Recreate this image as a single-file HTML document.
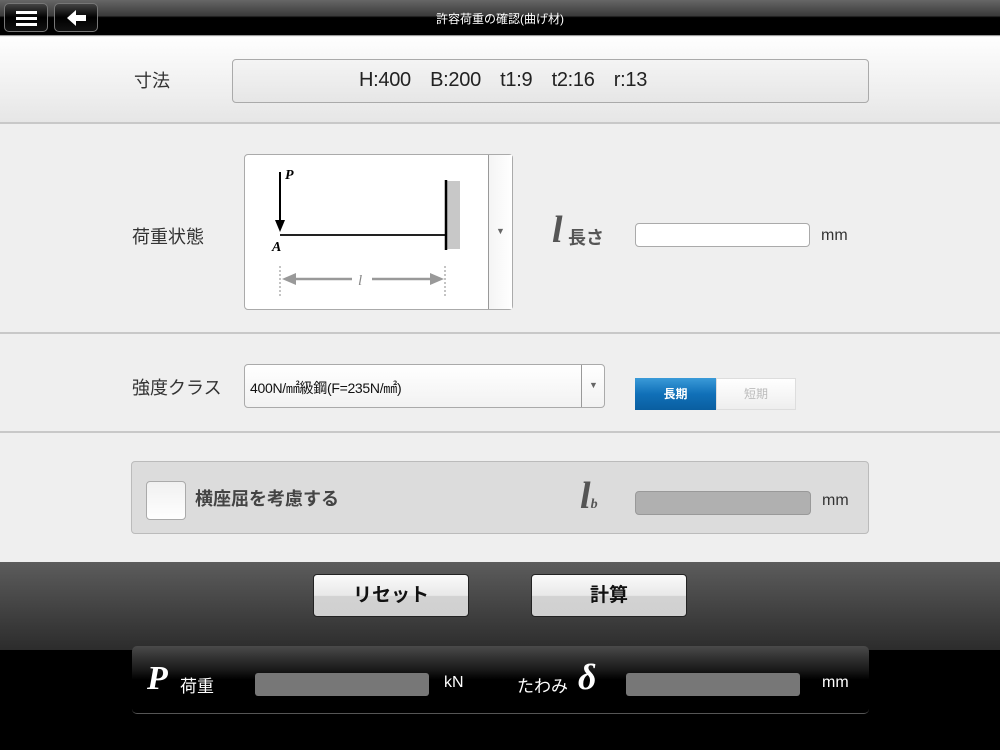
<!DOCTYPE html>
<html><head><meta charset="utf-8"><style>
*{margin:0;padding:0;box-sizing:border-box}
body{width:1000px;height:750px;overflow:hidden;background:#efefef;font-family:"Liberation Sans","Noto Sans CJK JP",sans-serif;position:relative}
.a{position:absolute}
.top{left:0;top:0;width:1000px;height:36px;background:linear-gradient(#666 0,#3a3a3a 45%,#000 50%,#000 100%);border-bottom:1px solid #999}
.tb{top:3px;height:29px;border:1px solid #777;border-radius:5px;background:linear-gradient(#444,#000 50%,#111)}
.lbl{font-size:18px;color:#333}
.line{left:0;width:1000px;height:2px;background:#c8c8c8}
.sel{background:linear-gradient(#fff,#f2f2f2);border:1px solid #aaa;border-radius:4px}
.btn{top:574px;width:156px;height:43px;border-radius:4px;border:1px solid #222;background:linear-gradient(#fafafa,#e8e8e8 50%,#d2d2d2 52%,#d0d0d0);font-size:19px;font-weight:bold;text-align:center;line-height:41px;color:#111}
.ser{font-family:"Liberation Serif",serif;font-style:italic;font-weight:bold}
</style></head><body>
<div class="a top"></div>
<div class="a tb" style="left:4px;width:44px"><div class="a" style="left:11px;top:7px;width:21px;height:3px;background:#fff;box-shadow:0 6px 0 #fff,0 12px 0 #fff"></div></div>
<div class="a tb" style="left:54px;width:44px"><svg class="a" style="left:10px;top:4px" width="24" height="20"><path d="M2 10 L11 2 L11 7 L21 7 L21 13 L11 13 L11 18 Z" fill="#fff"/></svg></div>
<div class="a" style="left:0;width:1000px;top:10px;text-align:center;color:#fff;font-size:12px">許容荷重の確認(曲げ材)</div>

<div class="a" style="left:0;top:37px;width:1000px;height:86px;background:linear-gradient(#fefefe,#e6e6e6)"></div>
<div class="a lbl" style="left:134px;top:67px">寸法</div>
<div class="a" style="left:232px;top:59px;width:637px;height:44px;border:1px solid #aaa;border-radius:4px;background:linear-gradient(#f4f4f4,#e6e6e6);line-height:40px;font-size:20px;color:#222;word-spacing:14px;padding-left:126px;letter-spacing:-0.3px">H:400 B:200 t1:9 t2:16 r:13</div>
<div class="a line" style="top:122px"></div>

<div class="a lbl" style="left:132px;top:223px">荷重状態</div>
<div class="a sel" style="left:244px;top:154px;width:269px;height:156px;background:#fff"></div>
<div class="a" style="left:488px;top:155px;width:1px;height:154px;background:#999"></div>
<div class="a" style="left:489px;top:155px;width:23px;height:154px;background:linear-gradient(90deg,#f4f4f4,#fff)"></div>
<div class="a" style="left:496px;top:226px;font-size:9px;color:#666">▼</div>
<svg class="a" style="left:244px;top:154px" width="245" height="156">
<line x1="36" y1="18" x2="36" y2="72" stroke="#000" stroke-width="2"/><path d="M31 66 L41 66 L36 78 Z"/>
<text x="41" y="25" font-family="Liberation Serif" font-style="italic" font-weight="bold" font-size="14">P</text>
<line x1="36" y1="81" x2="202" y2="81" stroke="#222" stroke-width="2"/>
<rect x="202" y="27" width="14" height="68" fill="#c8c8c8"/><line x1="202" y1="26" x2="202" y2="96" stroke="#000" stroke-width="2.5"/>
<text x="28" y="97" font-family="Liberation Serif" font-style="italic" font-weight="bold" font-size="14">A</text>
<line x1="36" y1="112" x2="36" y2="142" stroke="#888" stroke-dasharray="2,2"/><line x1="201" y1="112" x2="201" y2="142" stroke="#888" stroke-dasharray="2,2"/>
<line x1="48" y1="125" x2="108" y2="125" stroke="#999" stroke-width="2.5"/><path d="M38 125 L52 119 L52 131 Z" fill="#999"/>
<line x1="128" y1="125" x2="190" y2="125" stroke="#999" stroke-width="2.5"/><path d="M200 125 L186 119 L186 131 Z" fill="#999"/>
<text x="114" y="131" font-family="Liberation Serif" font-style="italic" font-size="15" fill="#888">l</text>
</svg>
<div class="a ser" style="left:552px;top:208px;font-size:38px;color:#555">l</div>
<div class="a" style="left:568px;top:224px;font-size:18px;color:#555;font-weight:bold">長さ</div>
<div class="a" style="left:635px;top:223px;width:175px;height:24px;background:#fff;border:1px solid #aaa;border-radius:4px"></div>
<div class="a" style="left:821px;top:227px;font-size:16px;color:#333">mm</div>
<div class="a line" style="top:332px"></div>

<div class="a lbl" style="left:132px;top:374px">強度クラス</div>
<div class="a sel" style="left:244px;top:364px;width:361px;height:44px"></div>
<div class="a" style="left:581px;top:365px;width:1px;height:42px;background:#999"></div>
<div class="a" style="left:589px;top:380px;font-size:9px;color:#666">▼</div>
<div class="a" style="left:250px;top:378px;font-size:14px;color:#111;letter-spacing:-0.3px">400N/㎟級鋼(F=235N/㎟)</div>
<div class="a" style="left:635px;top:378px;width:81px;height:32px;background:linear-gradient(#3a9ad8,#1070b8 50%,#0a5ea0);color:#fff;font-size:12px;font-weight:bold;text-align:center;line-height:32px">長期</div>
<div class="a" style="left:716px;top:378px;width:80px;height:32px;background:linear-gradient(#fff,#eee);border:1px solid #ddd;color:#bbb;font-size:12px;text-align:center;line-height:30px">短期</div>
<div class="a line" style="top:431px"></div>

<div class="a" style="left:131px;top:461px;width:738px;height:73px;background:#dcdcdc;border:1px solid #bbb;border-radius:4px"></div>
<div class="a" style="left:146px;top:481px;width:40px;height:39px;background:linear-gradient(#f0f0f0,#fff);border:1px solid #aaa;border-radius:4px"></div>
<div class="a" style="left:195px;top:485px;font-size:18px;color:#444;font-weight:bold">横座屈を考慮する</div>
<div class="a ser" style="left:580px;top:474px;font-size:38px;color:#555">l<span style="font-size:14px">b</span></div>
<div class="a" style="left:635px;top:491px;width:176px;height:24px;background:#b0b0b0;border:1px solid #999;border-radius:4px"></div>
<div class="a" style="left:822px;top:492px;font-size:16px;color:#333">mm</div>

<div class="a" style="left:0;top:562px;width:1000px;height:88px;background:linear-gradient(#5c5c5c,#2c2c2c)"></div>
<div class="a" style="left:0;top:650px;width:1000px;height:100px;background:#000"></div>
<div class="a btn" style="left:313px">リセット</div>
<div class="a btn" style="left:531px">計算</div>
<div class="a" style="left:132px;top:646px;width:737px;height:68px;border-radius:5px;border-bottom:1px solid #555;background:linear-gradient(#4a4a4a,#1a1a1a 35%,#000 50%,#000)"></div>
<div class="a ser" style="left:147px;top:660px;font-size:34px;color:#fff">P</div>
<div class="a" style="left:180px;top:672px;font-size:17px;color:#fff">荷重</div>
<div class="a" style="left:255px;top:673px;width:174px;height:23px;background:#777;border-radius:3px"></div>
<div class="a" style="left:444px;top:674px;font-size:16px;color:#fff">kN</div>
<div class="a" style="left:517px;top:672px;font-size:17px;color:#fff">たわみ</div>
<div class="a ser" style="left:578px;top:656px;font-size:36px;color:#fff">δ</div>
<div class="a" style="left:626px;top:673px;width:174px;height:23px;background:#777;border-radius:3px"></div>
<div class="a" style="left:822px;top:674px;font-size:16px;color:#fff">mm</div>
</body></html>
